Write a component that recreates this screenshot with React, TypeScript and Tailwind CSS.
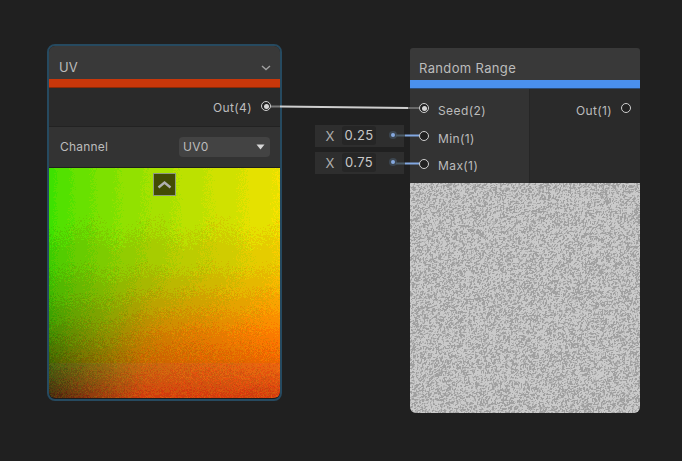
import { useEffect, useRef } from "react";

function rng(seed: number) {
  let s = seed >>> 0;
  return () => {
    s = (s * 1664525 + 1013904223) >>> 0;
    return s / 4294967296;
  };
}

function UvPreview() {
  const ref = useRef<HTMLCanvasElement>(null);
  useEffect(() => {
    const c = ref.current;
    if (!c) return;
    const ctx = c.getContext("2d");
    if (!ctx) return;
    const W = c.width;
    const H = c.height;
    const img = ctx.createImageData(W, H);
    const rand = rng(42);
    for (let py = 0; py < H; py++) {
      for (let px = 0; px < W; px++) {
        const x = px / (W - 1);
        const y = py / (H - 1);
        const top = 0.24 + 0.72 * Math.pow(x, 0.72);
        const bottom = 0.3 + 0.54 * Math.pow(Math.min(1, x / 0.42), 0.9);
        const t = Math.pow(y, 3);
        const bump = x > 0.25 ? Math.min(1, (x - 0.25) * 4) * Math.max(0, 1 - Math.abs(y - 0.72) * 3.5) : 0;
        const r = top + (bottom - top) * t + 0.1 * bump;
        let g = 0.93 - 0.66 * y * y - 0.07 * bump;
        if (x < 0.3 && y > 0.65) g -= (0.3 - x) * (y - 0.65) * 0.8;
        g += 0.012 * Math.sin(x * 22 + y * 4) * (1 - y);
        const spread = 0.03 + 0.07 * y;
        const n1 = (rand() - 0.5) * spread;
        const n2 = (rand() - 0.5) * spread;
        const q = (v: number) => Math.max(0, Math.min(1, Math.round(v * 12) / 12));
        const i = (py * W + px) * 4;
        img.data[i] = q(r + n1) * 250;
        img.data[i + 1] = q(g + n2) * 245;
        img.data[i + 2] = y > 0.85 ? 14 : 0;
        img.data[i + 3] = 255;
      }
    }
    ctx.putImageData(img, 0, 0);
  }, []);
  return <canvas ref={ref} width={231} height={230} className="block h-[230px] w-[231px] rounded-b-[5px]" />;
}

function NoisePreview() {
  const ref = useRef<HTMLCanvasElement>(null);
  useEffect(() => {
    const c = ref.current;
    if (!c) return;
    const ctx = c.getContext("2d");
    if (!ctx) return;
    const W = c.width;
    const H = c.height;
    const rand = rng(7);
    const cell = new Float32Array(W * H);
    for (let i = 0; i < W * H; i++) cell[i] = rand();
    const at = (x: number, y: number) => cell[Math.min(H - 1, y) * W + Math.min(W - 1, x)];
    const img = ctx.createImageData(W, H);
    for (let y = 0; y < H; y++) {
      for (let x = 0; x < W; x++) {
        const v = (at(x, y) * 2 + at(x + 1, y) + at(x, y + 1)) / 4;
        const g = v > 0.52 ? 202 : v > 0.4 ? 182 : 160;
        const i = (y * W + x) * 4;
        img.data[i] = g;
        img.data[i + 1] = g;
        img.data[i + 2] = g;
        img.data[i + 3] = 255;
      }
    }
    ctx.putImageData(img, 0, 0);
  }, []);
  return <canvas ref={ref} width={230} height={230} className="block h-[230px] w-[230px] rounded-b-[6px]" />;
}

function Port({ filled }: { filled?: boolean }) {
  return (
    <span className="relative z-20 flex h-[10px] w-[10px] shrink-0 items-center justify-center rounded-full border border-[#cfcfcf] bg-[#222222]">
      {filled && <span className="h-[5px] w-[5px] rounded-full bg-[#d4d4d4]" />}
    </span>
  );
}

function InlineInput({ value, top }: { value: string; top: string }) {
  return (
    <div className={`absolute left-[315px] flex h-[22px] w-[89px] items-start bg-[#2e2e2e] pt-[1px] ${top}`}>
      <span className="mt-[1px] w-[27px] pl-[3px] text-center text-[13px] text-[#aeaeae]">X</span>
      <span className="flex h-[19px] w-[34px] items-center justify-center rounded-[3px] bg-[#262626] text-[13px] tracking-[0.4px] text-[#c8c8c8]">
        {value}
      </span>
      <span className="ml-[13px] mt-[5px] flex h-[8px] w-[8px] items-center justify-center rounded-full bg-[#3c4650]">
        <span className="h-[4px] w-[4px] rounded-full bg-[#86a9e0]" />
      </span>
    </div>
  );
}

export default function App() {
  return (
    <div
      className="relative h-[461px] w-[682px] overflow-hidden bg-[#202020] text-[#bcbcbc]"
      style={{ fontFamily: "Inter, 'Liberation Sans', sans-serif" }}
    >
      {/* UV node */}
      <div className="absolute left-[47px] top-[44px] w-[235px] rounded-[8px] border-2 border-[#264a60] bg-[#1c1c1c] pb-[1px]">
        <div className="overflow-hidden rounded-[6px]">
          <div className="flex h-[33px] items-center justify-between bg-[#393939] pl-[10px] pr-[9px] pt-[10px] text-[13px]">
            <span>UV</span>
            <svg width="10" height="6" viewBox="0 0 10 6">
              <path d="M1 1l4 3.5L9 1" fill="none" stroke="#a0a0a0" strokeWidth="1.4" />
            </svg>
          </div>
          <div className="h-[9px] border-b border-[#8a2a08] bg-[#c9370a]" />
          <div className="flex h-[39px] items-center justify-end gap-[9px] border-b border-[#222222] bg-[#2a2a2a] pr-[9px] text-[12px] tracking-[0.4px]">
            <span className="mt-[2px]">Out(4)</span>
            <span className="-mt-[2px]">
              <Port filled />
            </span>
          </div>
          <div className="flex h-[41px] items-center justify-between border-b border-[#1f1f1f] bg-[#333333] pl-[11px] pr-[10px] text-[12px] tracking-[0.2px]">
            <span>Channel</span>
            <div className="flex h-[20px] w-[91px] items-center justify-between rounded-[4px] bg-[#434343] pl-[4px] pr-[5px] text-[12px] tracking-[0.3px]">
              <span>UV0</span>
              <svg width="9" height="6" viewBox="0 0 9 6">
                <path d="M0.5 0.5h8L4.5 5.5z" fill="#d8d8d8" />
              </svg>
            </div>
          </div>
          <div className="relative">
            <UvPreview />
            <div className="absolute left-[104px] top-[5px] flex h-[23px] w-[23px] items-center justify-center border border-[#8f9a80] bg-[#424c04]">
              <svg width="15" height="9" viewBox="0 0 15 9">
                <path d="M1.5 7.5L7.5 2.5l6 5" fill="none" stroke="#b0b0b0" strokeWidth="2.4" />
              </svg>
            </div>
          </div>
        </div>
      </div>

      {/* Random Range node */}
      <div className="absolute left-[410px] top-[48px] w-[230px] overflow-hidden rounded-[3px]">
        <div className="flex h-[32px] items-center bg-[#393939] pl-[9px] pt-[9px] text-[13px] tracking-[0.35px]">
          Random Range
        </div>
        <div className="h-[9px] border-b border-[#2b4c78] bg-[#4a90ee]" />
        <div className="flex h-[94px]">
          <div className="flex w-[119px] flex-col bg-[#333333] pl-[9px] pt-[14px] text-[12px] tracking-[0.4px]">
            <div className="flex h-[20px] items-start gap-[9px]">
              <Port filled />
              <span className="leading-[15px]">Seed(2)</span>
            </div>
            <div className="mt-[8px] flex h-[20px] items-start gap-[9px]">
              <Port />
              <span className="leading-[15px]">Min(1)</span>
            </div>
            <div className="mt-[8px] flex h-[19px] items-start gap-[9px]">
              <Port />
              <span className="-mt-[1px] leading-[15px]">Max(1)</span>
            </div>
          </div>
          <div className="flex flex-1 items-start justify-end gap-[9px] border-l border-[#262626] bg-[#2a2a2a] pr-[9px] pt-[14px] text-[12px] tracking-[0.35px]">
            <span className="leading-[15px]">Out(1)</span>
            <Port />
          </div>
        </div>
        <NoisePreview />
      </div>

      <InlineInput value="0.25" top="top-[125px]" />
      <InlineInput value="0.75" top="top-[152px]" />

      {/* Wires */}
      <svg className="pointer-events-none absolute left-0 top-0 z-10" width="682" height="461">
        <path d="M270 106.5H280" stroke="#7a7a7a" strokeWidth="2" fill="none" />
        <path d="M280 106.5L408 108" stroke="#cfcfcf" strokeWidth="2" fill="none" />
        <path d="M408 108H420" stroke="#6a6a6a" strokeWidth="2" fill="none" />
        <path d="M396 135.5H405" stroke="#4c5c68" strokeWidth="2" fill="none" />
        <path d="M405 135.5H420" stroke="#82a8e2" strokeWidth="2" fill="none" />
        <path d="M396 163.5H405" stroke="#4c5c68" strokeWidth="2" fill="none" />
        <path d="M405 163.5H420" stroke="#82a8e2" strokeWidth="2" fill="none" />
      </svg>
    </div>
  );
}
